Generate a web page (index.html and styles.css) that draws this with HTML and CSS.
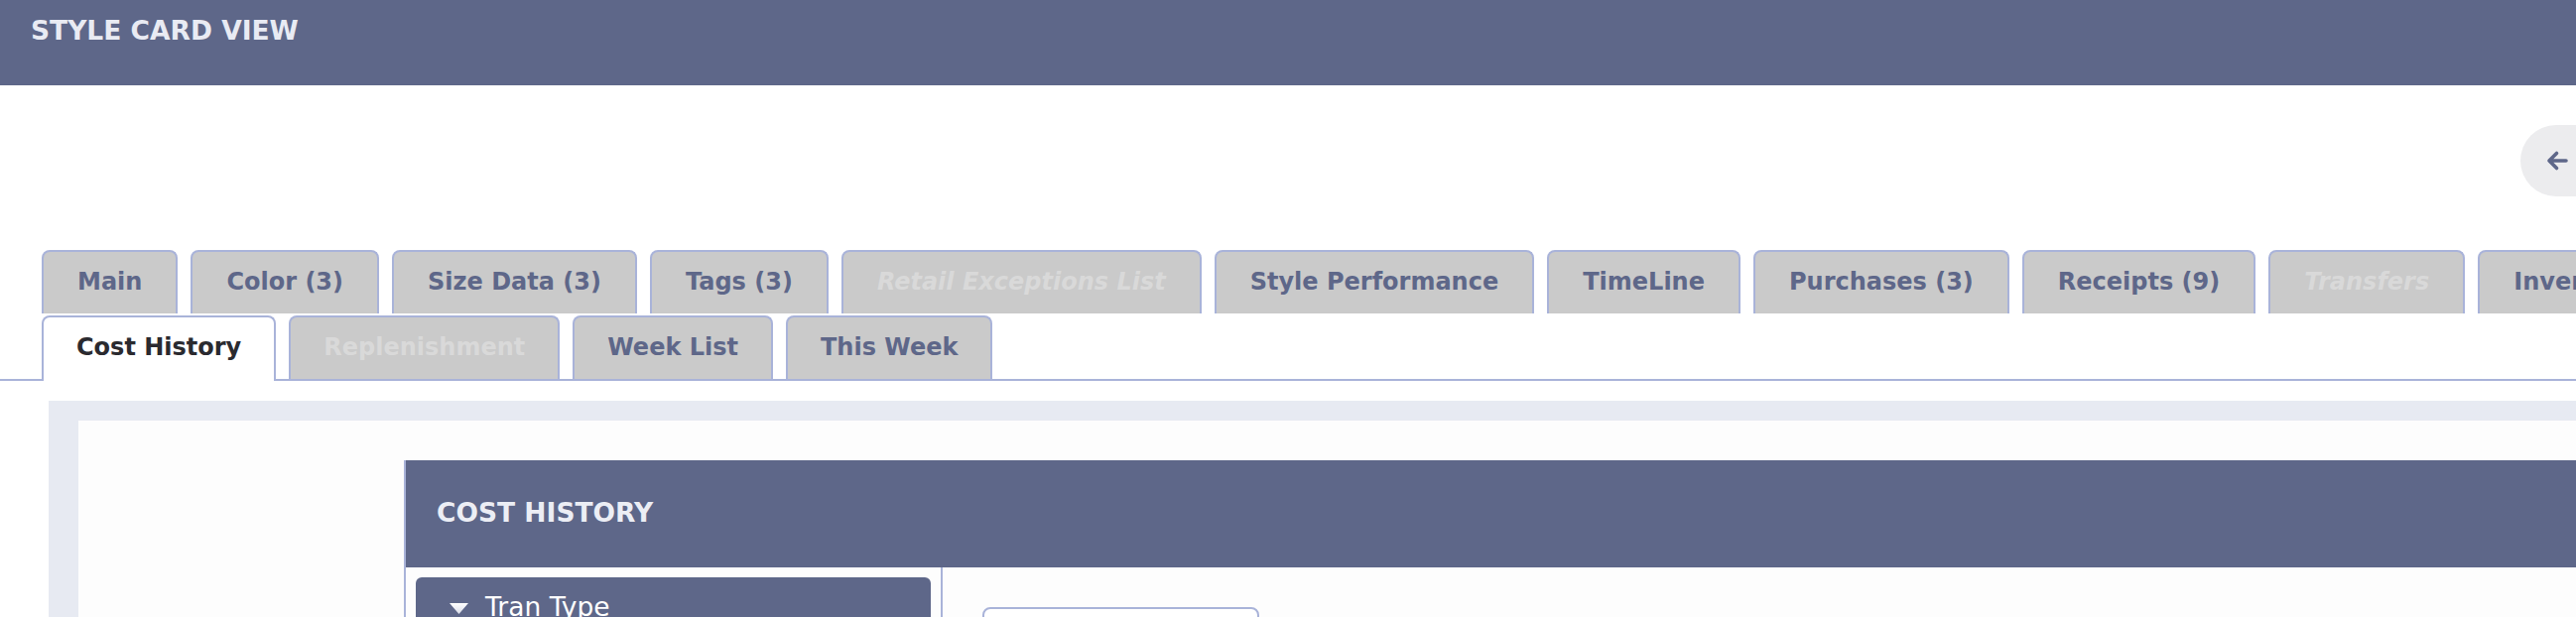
FILE: index.html
```html
<!DOCTYPE html>
<html lang="en">
<head>
<meta charset="utf-8">
<title>Style Card View</title>
<link rel="stylesheet" href="styles.css">
</head>
<body>
<div class="page">
  <header class="topbar">
    <h1 class="title">STYLE CARD VIEW</h1>
  </header>

  <div class="toolbar">
    <button class="back-btn" type="button" aria-label="Back">
      <svg class="back-icon" viewBox="0 0 22 22" aria-hidden="true">
        <path d="M20 11H3 M10.5 3.5L3 11l7.5 7.5"/>
      </svg>
    </button>
  </div>

  <nav class="tabs">
    <div class="tab-row tab-row-top">
      <a class="tab">Main</a>
      <a class="tab">Color (3)</a>
      <a class="tab">Size Data (3)</a>
      <a class="tab">Tags (3)</a>
      <a class="tab tab-disabled tab-italic">Retail Exceptions List</a>
      <a class="tab">Style Performance</a>
      <a class="tab">TimeLine</a>
      <a class="tab">Purchases (3)</a>
      <a class="tab">Receipts (9)</a>
      <a class="tab tab-disabled tab-italic">Transfers</a>
      <a class="tab">Inventory</a>
    </div>
    <div class="tab-row tab-row-bottom">
      <a class="tab tab-active">Cost History</a>
      <a class="tab tab-disabled">Replenishment</a>
      <a class="tab">Week List</a>
      <a class="tab">This Week</a>
    </div>
  </nav>

  <main class="panel">
    <div class="panel-inner">
      <section class="card">
        <div class="card-header">
          <h2 class="card-title">COST HISTORY</h2>
        </div>
        <div class="card-body">
          <aside class="sidebar">
            <div class="filter">
              <div class="filter-head">
                <svg class="filter-caret" viewBox="0 0 19 11" aria-hidden="true">
                  <defs>
                    <linearGradient id="caretGrad" x1="0" y1="0" x2="0" y2="1">
                      <stop offset="0" stop-color="#ffffff"/>
                      <stop offset="1" stop-color="#d9dce8"/>
                    </linearGradient>
                  </defs>
                  <polygon points="0,0 19,0 9.5,11" fill="url(#caretGrad)"/>
                </svg>
                <span class="filter-label">Tran Type</span>
              </div>
            </div>
          </aside>
          <div class="results">
            <div class="result-box"></div>
          </div>
        </div>
      </section>
    </div>
  </main>
</div>
</body>
</html>
```

FILE: styles.css
```css
* {
  box-sizing: border-box;
}

html, body {
  margin: 0;
  padding: 0;
  background: #ffffff;
}

body {
  overflow: hidden;
  font-family: "DejaVu Sans", Verdana, sans-serif;
}

.page {
  width: 2900px;
}

/* top title bar */
.topbar {
  height: 86px;
  background: #5e6789;
  padding: 16px 0 0 31px;
}

.title {
  margin: 0;
  font-size: 26.5px;
  line-height: 30px;
  font-weight: bold;
  color: #e9ebf3;
}

/* toolbar with back button */
.toolbar {
  width: 2596px;
  height: 166px;
  padding-top: 40px;
  display: flex;
  justify-content: flex-end;
}

.back-btn {
  width: 96px;
  height: 72px;
  margin-right: -40px;
  border: 0;
  border-radius: 36px;
  background: #ececee;
  padding: 0 0 0 26px;
  display: flex;
  align-items: center;
}

.back-icon {
  width: 22px;
  height: 22px;
  fill: none;
  stroke: #5e6789;
  stroke-width: 3.6;
  stroke-linecap: round;
  stroke-linejoin: round;
}

/* tabs */
.tab-row {
  display: flex;
  gap: 13px;
  padding-left: 42px;
  white-space: nowrap;
}

.tab-row-top {
  margin-bottom: 2px;
}

.tab-row-bottom {
  align-items: flex-end;
  border-bottom: 2px solid #a9b3d9;
}

.tab {
  flex: none;
  height: 64px;
  padding: 16px 34px 0;
  border: 2px solid #a9b3d9;
  border-bottom: 0;
  border-radius: 8px 8px 0 0;
  background: #cacaca;
  color: #5e6789;
  font-size: 24px;
  line-height: 28px;
  font-weight: bold;
  text-decoration: none;
}

.tab-row-bottom .tab {
  padding-left: 33px;
  padding-right: 33px;
}

.tab-disabled {
  color: #d9d9d9;
}

.tab-italic {
  font-style: italic;
}

.tab-row-bottom .tab-active {
  height: 66px;
  margin-bottom: -2px;
  background: #ffffff;
  color: #2a2a2f;
}

/* content panel */
.panel {
  display: block;
  margin: 20px 0 0 49px;
  background: #e7eaf2;
  padding: 20px 0 0 30px;
}

.panel-inner {
  background: #fdfdfd;
  padding: 40px 0 0 328px;
}

.card {
  border: 2px solid #a9b3d9;
  border-top: 0;
}

.card-header {
  height: 108px;
  background: #5e6789;
  padding: 38px 0 0 31px;
}

.card-title {
  margin: 0;
  font-size: 26.5px;
  line-height: 30px;
  font-weight: bold;
  color: #eceef5;
}

.card-body {
  display: flex;
  height: 220px;
}

.sidebar {
  flex: none;
  width: 541px;
  border-right: 2px solid #a9b3d9;
  padding: 10px;
}

.filter {
  height: 90px;
  background: #5e6789;
  border-radius: 6px;
  padding: 16px 0 0 34px;
}

.filter-head {
  display: flex;
  align-items: center;
  gap: 17px;
  height: 28px;
}

.filter-caret {
  width: 19px;
  height: 11px;
  margin-top: 2px;
}

.filter-label {
  font-size: 26.5px;
  line-height: 28px;
  color: #ffffff;
}

.results {
  flex: 1;
  padding: 40px 0 0 40px;
}

.result-box {
  width: 279px;
  height: 80px;
  border: 2px solid #a9b3d9;
  border-radius: 8px;
  background: #ffffff;
}
```
